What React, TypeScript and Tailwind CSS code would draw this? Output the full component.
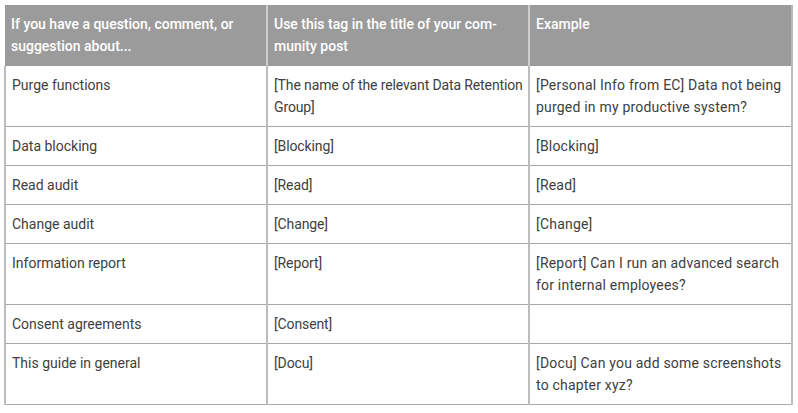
const rows: [string, string, string][] = [
  ['Purge functions', '[The name of the relevant Data Retention Group]', '[Personal Info from EC] Data not being purged in my productive system?'],
  ['Data blocking', '[Blocking]', '[Blocking]'],
  ['Read audit', '[Read]', '[Read]'],
  ['Change audit', '[Change]', '[Change]'],
  ['Information report', '[Report]', '[Report] Can I run an advanced search for internal employees?'],
  ['Consent agreements', '[Consent]', ''],
  ['This guide in general', '[Docu]', '[Docu] Can you add some screenshots to chapter xyz?'],
];

const App = () => {
  return (
    <div className="bg-white w-[798px] h-[413px] pt-[5px] pl-[4px]" style={{ fontFamily: 'Roboto, "Open Sans", sans-serif' }}>
      <table className="w-[787px] border-collapse table-fixed text-[14px] leading-[22px] text-[#404040]">
        <colgroup>
          <col className="w-[262px]" />
          <col className="w-[262px]" />
          <col className="w-[263px]" />
        </colgroup>
        <thead>
          <tr className="bg-[#9b9b9b] text-white h-[61px] align-top">
            <th className="text-left font-medium pl-[6px] pr-[2px] pt-[8px] border-r-2 border-[#cdcdcd]">
              If you have a question, comment, or suggestion about...
            </th>
            <th className="text-left font-medium pl-[6px] pr-[2px] pt-[8px] border-r-2 border-[#cdcdcd]">
              Use this tag in the title of your com-
              <br />
              munity post
            </th>
            <th className="text-left font-medium pl-[6px] pr-[2px] pt-[8px] border-r-2 border-[#b8b8b8]">Example</th>
          </tr>
        </thead>
        <tbody>
          {rows.map(([a, b, c]) => (
            <tr key={a} className="align-top">
              <td className="border-x-2 border-b border-x-[#bdbdbd] border-b-[#a8a8a8] pl-[6px] pr-[2px] py-[8px]">{a}</td>
              <td className="border-x-2 border-b border-x-[#bdbdbd] border-b-[#a8a8a8] pl-[6px] pr-[2px] py-[8px] tracking-[-0.12px]">{b}</td>
              <td className="border-x-2 border-b border-x-[#bdbdbd] border-b-[#a8a8a8] pl-[6px] pr-[2px] py-[8px] h-[39px] tracking-[0.2px]">{c}</td>
            </tr>
          ))}
        </tbody>
      </table>
    </div>
  );
};

export default App;
